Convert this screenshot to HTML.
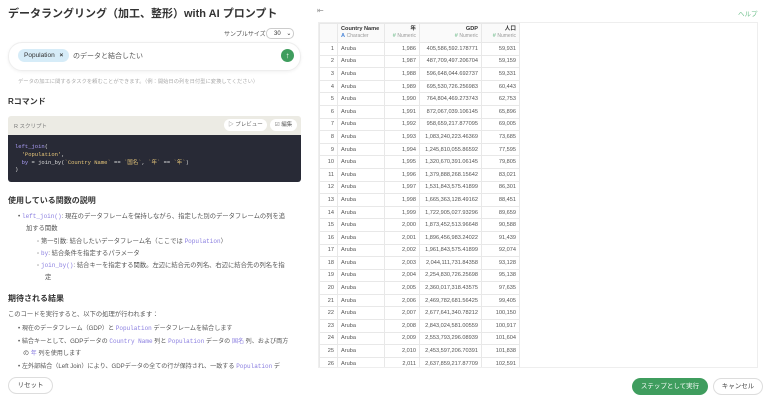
<!DOCTYPE html>
<html><head><meta charset="utf-8"><style>
*{box-sizing:border-box;margin:0;padding:0}
body{width:768px;height:400px;overflow:hidden;background:#fff;font-family:"Liberation Sans","Noto Sans CJK JP",sans-serif;color:#333;position:relative}
.a{position:absolute}
.kw{color:#8a7ee0;font-family:"Liberation Mono","Noto Sans CJK JP",monospace;font-size:6px}
.sm{font-size:6.3px;color:#555;white-space:nowrap}
table{border-collapse:collapse;font-size:5.6px;color:#555;table-layout:fixed;width:200px}
td{border:1px solid #e8e8e8;height:12.6px;padding:0 3px;white-space:nowrap;overflow:hidden}
td.r{text-align:right}
</style></head><body>
<div class="a" style="left:8px;top:5px;font-size:11px;font-weight:bold;color:#333">データラングリング（加工、整形）with AI プロンプト</div>
<div class="a sm" style="left:224px;top:29px;font-size:6px">サンプルサイズ</div>
<div class="a" style="left:266px;top:28px;width:28px;height:11px;border:1px solid #ccc;border-radius:5px;font-size:6px;padding:1px 0 0 7px;white-space:nowrap;line-height:8px">30 <span style="margin-left:4px">⌄</span></div>
<div class="a" style="left:8px;top:42px;width:293px;height:29px;border:1px solid #eee;border-radius:14px;box-shadow:0 1px 3px rgba(0,0,0,.06)"></div>
<div class="a" style="left:18px;top:49px;width:51px;height:13px;background:#d6ecf8;border-radius:7px;font-size:6.5px;padding:3px 0 0 6px;color:#333;white-space:nowrap">Population <b style="margin-left:3px">×</b></div>
<div class="a" style="left:73px;top:51px;font-size:7px;color:#555">のデータと結合したい</div>
<div class="a" style="left:281px;top:49px;width:13px;height:13px;background:#3f9d5e;border-radius:50%;color:#fff;font-size:8px;text-align:center;line-height:13px">↑</div>
<div class="a" style="left:18px;top:77px;font-size:5.3px;color:#aaa;white-space:nowrap">データの加工に関するタスクを頼むことができます。（例：開始日の列を日付型に変換してください）</div>
<div class="a" style="left:8px;top:96px;font-size:8px;font-weight:bold">Rコマンド</div>
<div class="a" style="left:8px;top:116px;width:293px;height:19px;background:#ecebe4;border-radius:3px 3px 0 0"></div>
<div class="a" style="left:14px;top:122px;font-size:5.5px;color:#777">R スクリプト</div>
<div class="a" style="left:224px;top:119px;width:43px;height:12px;background:#fff;border-radius:6px;font-size:5.5px;color:#666;text-align:center;line-height:12px">▷ プレビュー</div>
<div class="a" style="left:270px;top:119px;width:27px;height:12px;background:#fff;border-radius:6px;font-size:5.5px;color:#666;text-align:center;line-height:12px">☑ 編集</div>
<div class="a" style="left:8px;top:135px;width:293px;height:47px;background:#282a36;border-radius:0 0 3px 3px;padding:8px 7px;font-family:'Liberation Mono','Noto Sans CJK JP',monospace;font-size:5.5px;line-height:7.8px;color:#ddd;white-space:pre"><span style="color:#a99cf5">left_join</span>(
  <span style="color:#e8c77a">'Population'</span>,
  <span style="color:#a99cf5">by</span> = join_by(<span style="color:#e8c77a">`Country Name`</span> == <span style="color:#e8c77a">`国名`</span>, <span style="color:#e8c77a">`年`</span> == <span style="color:#e8c77a">`年`</span>)
)</div>
<div class="a" style="left:8px;top:195px;font-size:8px;font-weight:bold">使用している関数の説明</div>
<div class="a sm" style="left:18px;top:211px;width:280px;line-height:12.3px">
<div>• <span class="kw">left_join()</span>: 現在のデータフレームを保持しながら、指定した別のデータフレームの列を追</div>
<div style="padding-left:8px">加する関数</div>
<div style="padding-left:19px">◦ 第一引数: 結合したいデータフレーム名（ここでは <span class="kw">Population</span>）</div>
<div style="padding-left:19px">◦ <span class="kw">by</span>: 結合条件を指定するパラメータ</div>
<div style="padding-left:19px">◦ <span class="kw">join_by()</span>: 結合キーを指定する関数。左辺に結合元の列名、右辺に結合先の列名を指</div>
<div style="padding-left:27px">定</div></div>
<div class="a" style="left:8px;top:293px;font-size:8px;font-weight:bold">期待される結果</div>
<div class="a sm" style="left:8px;top:309px">このコードを実行すると、以下の処理が行われます：</div>
<div class="a sm" style="left:18px;top:323px;width:285px;line-height:12.5px;font-size:6.1px">
<div>• 現在のデータフレーム（GDP）と <span class="kw">Population</span> データフレームを結合します</div>
<div>• 結合キーとして、GDPデータの <span class="kw">Country Name</span> 列と <span class="kw">Population</span> データの <span class="kw">国名</span> 列、および両方</div>
<div style="padding-left:5px">の <span class="kw">年</span> 列を使用します</div>
<div>• 左外部結合（Left Join）により、GDPデータの全ての行が保持され、一致する <span class="kw">Population</span> デ</div></div>
<div class="a" style="left:8px;top:377px;width:45px;height:17px;border:1px solid #ddd;border-radius:9px;font-size:6.5px;text-align:center;line-height:15px;color:#444;background:#fff">リセット</div>
<div class="a" style="left:317px;top:6px;font-size:8px;color:#999">⇤</div>
<div class="a" style="left:738px;top:8px;font-size:6.5px;color:#6cbf8a">ヘルプ</div>
<div class="a" style="left:318px;top:22px;width:440px;height:346px;border:1px solid #eee;overflow:hidden">
<table>
<colgroup><col style="width:18px"><col style="width:47px"><col style="width:35px"><col style="width:62px"><col style="width:38px"></colgroup>
<tr style="height:19px"><td style="background:#fafafa"></td><td style="background:#fafafa;line-height:7px"><b style="color:#333">Country Name</b><br><span style="color:#4a86d8;font-weight:bold">A</span> <span style="color:#999;font-size:5px">Character</span></td><td class="r" style="background:#fafafa;line-height:7px"><b style="color:#333">年</b><br><span style="color:#5bb27a">#</span> <span style="color:#999;font-size:5px">Numeric</span></td><td class="r" style="background:#fafafa;line-height:7px"><b style="color:#333">GDP</b><br><span style="color:#5bb27a">#</span> <span style="color:#999;font-size:5px">Numeric</span></td><td class="r" style="background:#fafafa;line-height:7px"><b style="color:#333">人口</b><br><span style="color:#5bb27a">#</span> <span style="color:#999;font-size:5px">Numeric</span></td></tr>
<tr><td class="r">1</td><td>Aruba</td><td class="r">1,986</td><td class="r">405,586,592.178771</td><td class="r">59,931</td></tr>
<tr><td class="r">2</td><td>Aruba</td><td class="r">1,987</td><td class="r">487,709,497.206704</td><td class="r">59,159</td></tr>
<tr><td class="r">3</td><td>Aruba</td><td class="r">1,988</td><td class="r">596,648,044.692737</td><td class="r">59,331</td></tr>
<tr><td class="r">4</td><td>Aruba</td><td class="r">1,989</td><td class="r">695,530,726.256983</td><td class="r">60,443</td></tr>
<tr><td class="r">5</td><td>Aruba</td><td class="r">1,990</td><td class="r">764,804,469.273743</td><td class="r">62,753</td></tr>
<tr><td class="r">6</td><td>Aruba</td><td class="r">1,991</td><td class="r">872,067,039.106145</td><td class="r">65,896</td></tr>
<tr><td class="r">7</td><td>Aruba</td><td class="r">1,992</td><td class="r">958,659,217.877095</td><td class="r">69,005</td></tr>
<tr><td class="r">8</td><td>Aruba</td><td class="r">1,993</td><td class="r">1,083,240,223.46369</td><td class="r">73,685</td></tr>
<tr><td class="r">9</td><td>Aruba</td><td class="r">1,994</td><td class="r">1,245,810,055.86592</td><td class="r">77,595</td></tr>
<tr><td class="r">10</td><td>Aruba</td><td class="r">1,995</td><td class="r">1,320,670,391.06145</td><td class="r">79,805</td></tr>
<tr><td class="r">11</td><td>Aruba</td><td class="r">1,996</td><td class="r">1,379,888,268.15642</td><td class="r">83,021</td></tr>
<tr><td class="r">12</td><td>Aruba</td><td class="r">1,997</td><td class="r">1,531,843,575.41899</td><td class="r">86,301</td></tr>
<tr><td class="r">13</td><td>Aruba</td><td class="r">1,998</td><td class="r">1,665,363,128.49162</td><td class="r">88,451</td></tr>
<tr><td class="r">14</td><td>Aruba</td><td class="r">1,999</td><td class="r">1,722,905,027.93296</td><td class="r">89,659</td></tr>
<tr><td class="r">15</td><td>Aruba</td><td class="r">2,000</td><td class="r">1,873,452,513.96648</td><td class="r">90,588</td></tr>
<tr><td class="r">16</td><td>Aruba</td><td class="r">2,001</td><td class="r">1,896,456,983.24022</td><td class="r">91,439</td></tr>
<tr><td class="r">17</td><td>Aruba</td><td class="r">2,002</td><td class="r">1,961,843,575.41899</td><td class="r">92,074</td></tr>
<tr><td class="r">18</td><td>Aruba</td><td class="r">2,003</td><td class="r">2,044,111,731.84358</td><td class="r">93,128</td></tr>
<tr><td class="r">19</td><td>Aruba</td><td class="r">2,004</td><td class="r">2,254,830,726.25698</td><td class="r">95,138</td></tr>
<tr><td class="r">20</td><td>Aruba</td><td class="r">2,005</td><td class="r">2,360,017,318.43575</td><td class="r">97,635</td></tr>
<tr><td class="r">21</td><td>Aruba</td><td class="r">2,006</td><td class="r">2,469,782,681.56425</td><td class="r">99,405</td></tr>
<tr><td class="r">22</td><td>Aruba</td><td class="r">2,007</td><td class="r">2,677,641,340.78212</td><td class="r">100,150</td></tr>
<tr><td class="r">23</td><td>Aruba</td><td class="r">2,008</td><td class="r">2,843,024,581.00559</td><td class="r">100,917</td></tr>
<tr><td class="r">24</td><td>Aruba</td><td class="r">2,009</td><td class="r">2,553,793,296.08939</td><td class="r">101,604</td></tr>
<tr><td class="r">25</td><td>Aruba</td><td class="r">2,010</td><td class="r">2,453,597,206.70391</td><td class="r">101,838</td></tr>
<tr><td class="r">26</td><td>Aruba</td><td class="r">2,011</td><td class="r">2,637,859,217.87709</td><td class="r">102,591</td></tr>
</table></div>
<div class="a" style="left:632px;top:378px;width:76px;height:17px;background:#3f9d5e;border-radius:9px;color:#fff;font-size:6.5px;text-align:center;line-height:17px">ステップとして実行</div>
<div class="a" style="left:713px;top:378px;width:50px;height:17px;border:1px solid #ddd;border-radius:9px;font-size:6.5px;text-align:center;line-height:15px;color:#444">キャンセル</div>
</body></html>
